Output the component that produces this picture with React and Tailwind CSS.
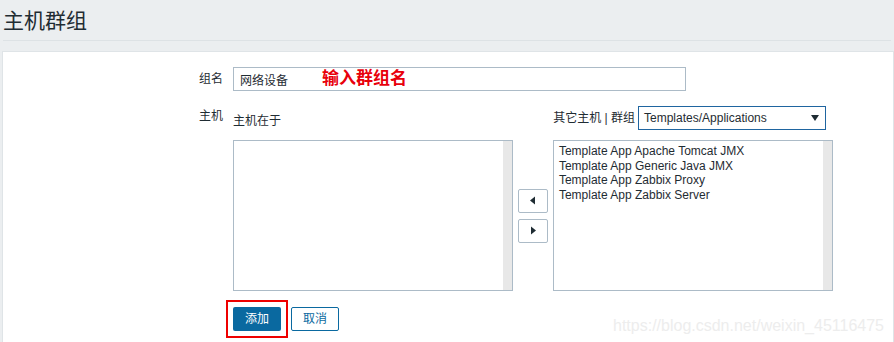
import React from "react";

const font = { fontFamily: '"Liberation Sans", Arial, "Noto Sans CJK SC", sans-serif' };

const templates = [
  "Template App Apache Tomcat JMX",
  "Template App Generic Java JMX",
  "Template App Zabbix Proxy",
  "Template App Zabbix Server",
];

const ListBox = ({ items = [] }) => (
  <div className="flex h-[151px] w-[281px] border border-[#acbbc7] bg-white">
    <div className="flex-1 pl-[5px] pt-[3px] text-[12px] leading-[14.5px] text-[#1f2c33]">
      {items.map((t) => (
        <div key={t}>{t}</div>
      ))}
    </div>
    <div className="w-[9px] bg-[#e8e8e8]" />
  </div>
);

const ArrowButton = ({ dir }) => (
  <button className="flex h-[24px] w-[30px] items-center justify-center rounded-[2px] border border-[#acbbc7] bg-white">
    <svg width="8" height="9" viewBox="0 0 8 9">
      {dir === "left" ? (
        <path d="M6 0.5 L6 8.5 L1 4.5 Z" fill="#1f2c33" />
      ) : (
        <path d="M2 0.5 L2 8.5 L7 4.5 Z" fill="#1f2c33" />
      )}
    </svg>
  </button>
);

export default function App() {
  return (
    <div className="relative h-[342px] w-[894px] overflow-hidden bg-[#ebeef0]" style={font}>
      {/* Header */}
      <div className="mx-[3px] flex h-[41px] items-center border-b border-[#dde2e5]">
        <h1 className="text-[21px] font-normal leading-none text-[#1f2c33]">主机群组</h1>
      </div>

      {/* Panel */}
      <div className="ml-[2px] mt-[10px] h-[300px] border border-[#dfe4e7] bg-white pt-[15px] text-[12px] text-[#1f2c33]">
        {/* Group name */}
        <div className="flex items-center">
          <label className="w-[220px] text-right">组名</label>
          <div className="relative ml-[10px]">
            <input
              readOnly
              value="网络设备"
              className="h-[24px] w-[453px] border border-[#acbbc7] px-[6px] text-[12px] text-[#1f2c33] outline-none"
              style={font}
            />
            <span className="absolute left-[89px] top-[1px] text-[17px] font-bold leading-[21px] text-[#e8000b]">
              输入群组名
            </span>
          </div>
        </div>

        {/* Hosts */}
        <div className="mt-[15px] flex">
          <label className="w-[220px] pt-[1px] text-right">主机</label>
          <div className="ml-[10px] w-[600px]">
            <div className="flex items-center justify-between pr-[7px]">
              <span className="pt-[6px]">主机在于</span>
              <div className="flex items-center">
                <span className="mr-[3px]">其它主机 | 群组</span>
                <div className="flex h-[24px] w-[188px] items-center justify-between border border-[#1f65a0] px-[5px]">
                  <span>Templates/Applications</span>
                  <svg width="8" height="6" viewBox="0 0 8 6" className="mr-[1px]">
                    <path d="M0 0 L8 0 L4 6 Z" fill="#1f2c33" />
                  </svg>
                </div>
              </div>
            </div>

            <div className="mt-[10px] flex items-center">
              <ListBox />
              <div className="flex w-[40px] flex-col items-center gap-[6px]">
                <ArrowButton dir="left" />
                <ArrowButton dir="right" />
              </div>
              <ListBox items={templates} />
            </div>

            <div className="mt-[16px] flex gap-[10px]">
              <div className="relative">
                <button className="h-[24px] w-[48px] rounded-[2px] bg-[#0a69a0] text-[12px] text-white">添加</button>
                <div className="pointer-events-none absolute -left-[7px] -top-[7px] h-[38px] w-[62px] border-2 border-[#ee0000]" />
              </div>
              <button className="h-[24px] w-[48px] rounded-[2px] border border-[#0a69a0] bg-white text-[12px] text-[#0a69a0]">
                取消
              </button>
            </div>
          </div>
        </div>
      </div>

      {/* Watermark */}
      <div className="pointer-events-none absolute left-[613px] top-[314px] text-[16px] text-[#ededed]">
        https://blog.csdn.net/weixin_45116475
      </div>
    </div>
  );
}
